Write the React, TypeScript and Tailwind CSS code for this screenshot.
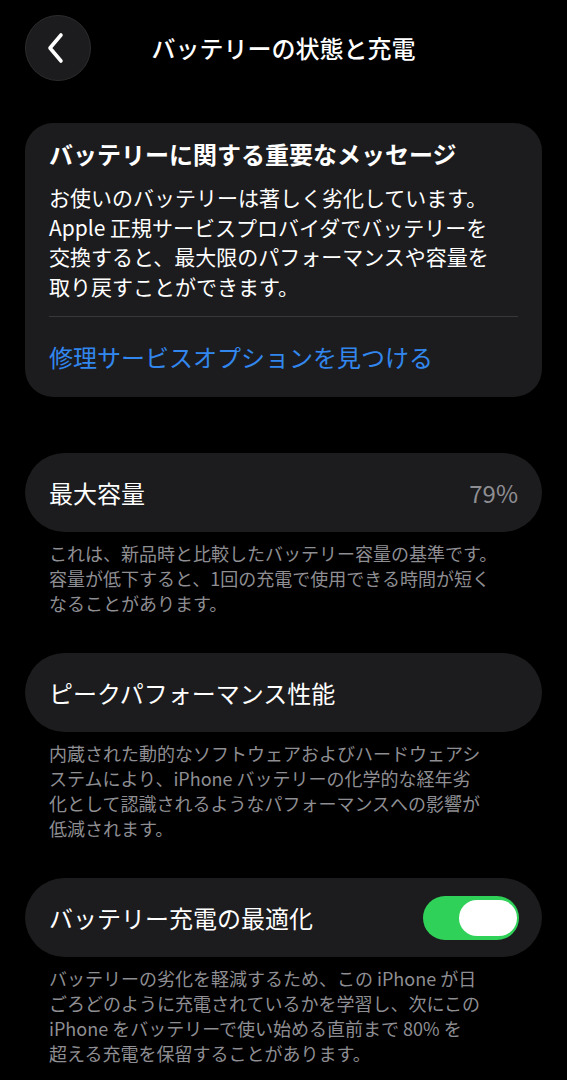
const sections = [
  {
    label: '最大容量',
    value: '79%',
    footer: [
      'これは、新品時と比較したバッテリー容量の基準です。',
      '容量が低下すると、1回の充電で使用できる時間が短く',
      'なることがあります。',
    ],
  },
  {
    label: 'ピークパフォーマンス性能',
    footer: [
      '内蔵された動的なソフトウェアおよびハードウェアシ',
      'ステムにより、iPhone バッテリーの化学的な経年劣',
      '化として認識されるようなパフォーマンスへの影響が',
      '低減されます。',
    ],
  },
  {
    label: 'バッテリー充電の最適化',
    toggle: true,
    footer: [
      'バッテリーの劣化を軽減するため、この iPhone が日',
      'ごろどのように充電されているかを学習し、次にこの',
      'iPhone をバッテリーで使い始める直前まで 80% を',
      '超える充電を保留することがあります。',
    ],
  },
];

const Toggle = () => (
  <div className="flex h-[44px] w-[96px] items-center justify-end rounded-full bg-[#30d158] pr-[2px]">
    <div className="h-[36px] w-[58px] rounded-full bg-white" />
  </div>
);

export default function App() {
  return (
    <div className="min-h-screen bg-black pb-10 font-['Noto_Sans_CJK_JP','Noto_Sans',sans-serif] text-white">
      {/* nav bar */}
      <div className="grid grid-cols-[1fr_auto_1fr] items-center px-[25px] pt-[15px]">
        <button className="flex h-[66px] w-[66px] items-center justify-center rounded-full border border-[#2c2c2e] bg-[#1c1c1e]">
          <svg width="20" height="32" viewBox="0 0 20 32" fill="none" className="-ml-[5px]">
            <path d="M15 3 L4 16 L15 29" stroke="white" strokeWidth="3.6" strokeLinecap="round" strokeLinejoin="round" />
          </svg>
        </button>
        <h1 className="text-[24px] leading-[32px] font-medium">バッテリーの状態と充電</h1>
        <div />
      </div>

      <div className="mt-[42px] px-[25px]">
        {/* important message */}
        <div className="rounded-[28px] bg-[#1c1c1e] px-[24px] pt-[15px] pb-[24px]">
          <h2 className="text-[24px] leading-[32px] font-semibold">バッテリーに関する重要なメッセージ</h2>
          <p className="mt-[13px] text-[21px] leading-[29.5px]">
            お使いのバッテリーは著しく劣化しています。
            <br />
            Apple 正規サービスプロバイダでバッテリーを
            <br />
            交換すると、最大限のパフォーマンスや容量を
            <br />
            取り戻すことができます。
          </p>
          <div className="mt-[15px] h-px bg-[#38383a]" />
          <a className="mt-[24px] block text-[24px] leading-[32px] text-[#3287ee]">修理サービスオプションを見つける</a>
        </div>

        {sections.map((s, i) => (
          <div key={s.label} className={i === 0 ? 'mt-[56px]' : 'mt-[37px]'}>
            <div className="flex h-[79px] items-center justify-between rounded-full bg-[#1c1c1e] pr-[23px] pl-[24px]">
              <span className="text-[24px] leading-[32px]">{s.label}</span>
              {s.value && <span className="pr-px text-[24px] leading-[32px] text-[#8e8e93]">{s.value}</span>}
              {s.toggle && <Toggle />}
            </div>
            <p className="mt-[9px] px-[24px] text-[18px] leading-[25px] text-[#8e8e93]">
              {s.footer.map((line, j) => (
                <span key={j} className="block whitespace-nowrap">
                  {line}
                </span>
              ))}
            </p>
          </div>
        ))}
      </div>
    </div>
  );
}
